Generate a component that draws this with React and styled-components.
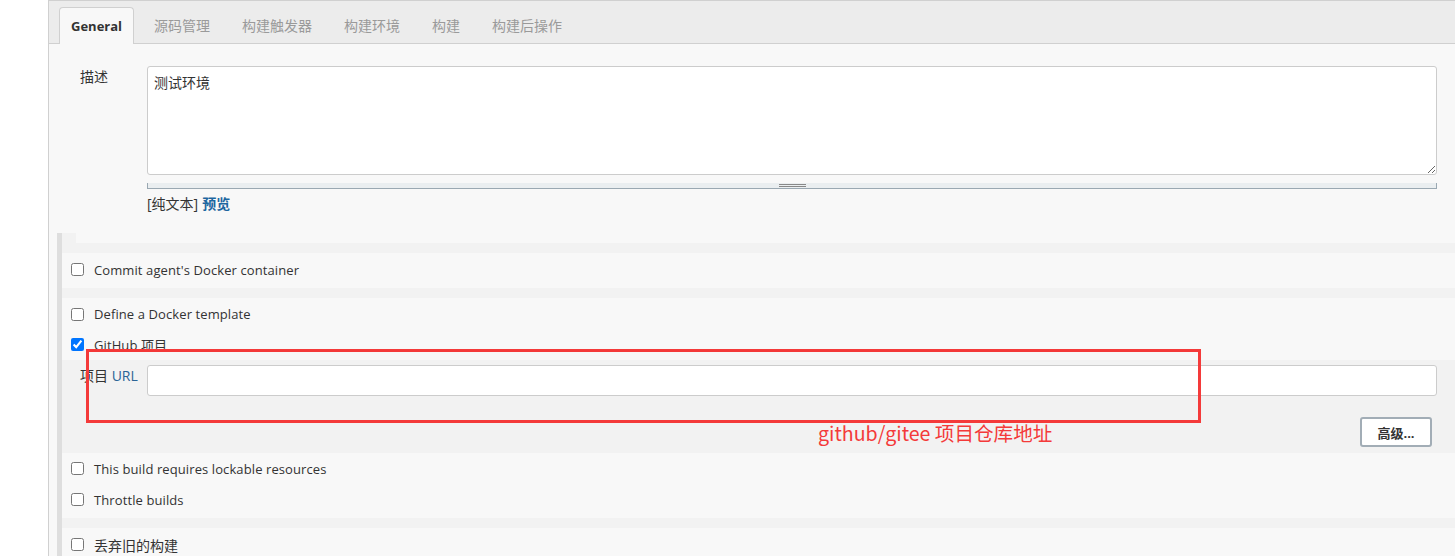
import React from 'react';
import styled, { createGlobalStyle } from 'styled-components';

const GlobalStyle = createGlobalStyle`
  html, body {
    margin: 0;
    padding: 0;
    background: #ffffff;
  }
  body {
    font-family: "Open Sans", "Noto Sans CJK SC", sans-serif;
    font-size: 13px;
    color: #333333;
  }
  * {
    box-sizing: border-box;
  }
`;

const Page = styled.div`
  position: relative;
  display: flex;
  width: 1455px;
  height: 556px;
  overflow: hidden;
`;

const Gutter = styled.div`
  flex: none;
  width: 48px;
  background: #ffffff;
`;

const Panel = styled.div`
  flex: 1;
  display: flex;
  flex-direction: column;
  background: #f8f8f8;
  border-left: 1px solid #d0d0d0;
  border-top: 1px solid #d0d0d0;
`;

const TabBar = styled.div`
  flex: none;
  display: flex;
  align-items: flex-end;
  height: 43px;
  padding-left: 10px;
  background: #ececec;
  border-bottom: 1px solid #d0d0d0;
`;

const Tab = styled.div`
  display: flex;
  align-items: center;
  height: ${p => (p.active ? '37px' : '36px')};
  margin-bottom: ${p => (p.active ? '-1px' : '0')};
  margin-right: ${p => (p.active ? '4px' : '0')};
  padding: 0 ${p => (p.active ? '11px' : '16px')};
  font-size: ${p => (p.active ? '13px' : '14px')};
  font-weight: ${p => (p.active ? 700 : 400)};
  color: ${p => (p.active ? '#333333' : '#9a9a9a')};
  background: ${p => (p.active ? '#f8f8f8' : 'transparent')};
  border: ${p => (p.active ? '1px solid #d0d0d0' : 'none')};
  border-bottom: none;
  border-radius: 4px 4px 0 0;
`;

const Form = styled.div`
  padding-top: 22px;
`;

const FieldRow = styled.div`
  display: grid;
  grid-template-columns: ${p => p.labelWidth}px 1fr;
  padding-right: ${p => (p.flush ? 0 : 18)}px;
`;

const FieldLabel = styled.div`
  padding-left: ${p => p.indent}px;
  padding-top: ${p => p.top || 0}px;
  line-height: 22px;
  font-size: 14px;
  color: #333333;
`;

const LinkWord = styled.span`
  color: #2a6496;
`;

const TextArea = styled.textarea`
  display: block;
  width: 100%;
  height: 109px;
  margin: 0;
  padding: 6px 6px;
  font-family: "Open Sans", "Noto Sans CJK SC", sans-serif;
  font-size: 14px;
  line-height: 20px;
  color: #333333;
  background: #ffffff;
  border: 1px solid #cccccc;
  border-radius: 3px;
  resize: vertical;
  outline: none;
`;

const Handle = styled.div`
  display: flex;
  flex-direction: column;
  align-items: center;
  gap: 1px;
  height: 6px;
  margin-top: 8px;
  padding-top: 1px;
  background: #eaeef0;
  border: 1px solid #9aa8b2;
  border-top: none;
`;

const GripLine = styled.div`
  width: 27px;
  height: 1px;
  background: #888888;
`;

const Preview = styled.div`
  margin-top: 5px;
  line-height: 20px;
  font-size: 14px;
  color: #333333;
`;

const PreviewLink = styled.span`
  margin-left: 4px;
  color: #1c66a0;
  font-weight: 700;
`;

const Section = styled.div`
  margin-top: 19px;
  margin-left: 8px;
  flex: 1;
  background: #f2f2f2;
  border-left: 5px solid #dedede;
`;

const SectionCap = styled.div`
  height: 10px;
  margin-left: 14px;
  background: #f8f8f8;
`;

const Block = styled.div`
  margin-top: ${p => (p.gap ? '10px' : '0')};
  padding: ${p => p.pad || '0'};
  background: #f8f8f8;
`;

const CheckLine = styled.label`
  display: flex;
  align-items: center;
  gap: 10px;
  height: ${p => p.h}px;
  padding-left: 9px;
  color: #333333;
  font-size: ${p => (p.cjk ? '14px' : '13px')};
  letter-spacing: ${p => (p.cjk ? '0' : '0.1px')};
`;

const Box = styled.input.attrs({ type: 'checkbox' })`
  width: 13px;
  height: 13px;
  margin: 0;
  accent-color: #0075ff;
`;

const Nested = styled.div`
  padding: 5px 18px 6px 0;
`;

const UrlInput = styled.input`
  display: block;
  width: 100%;
  height: 31px;
  margin: 0;
  padding: 0 6px;
  background: #ffffff;
  border: 1px solid #cccccc;
  border-radius: 3px;
  outline: none;
`;

const ButtonRow = styled.div`
  display: flex;
  justify-content: flex-end;
  margin-top: 21px;
  padding-right: 5px;
`;

const AdvancedButton = styled.button`
  width: 72px;
  height: 30px;
  padding: 0;
  font-family: "Open Sans", "Noto Sans CJK SC", sans-serif;
  font-size: 13px;
  font-weight: 700;
  color: #333333;
  background: #ffffff;
  border: 2px solid #a2adb6;
  border-radius: 3px;
`;

const Annotation = styled.div`
  position: absolute;
  left: 86px;
  top: 349px;
  width: 1115px;
  height: 74px;
  border: 3px solid #f43a3a;
  pointer-events: none;
`;

const AnnotationText = styled.div`
  position: absolute;
  left: 818px;
  top: 419px;
  font-family: "Noto Sans CJK SC", sans-serif;
  font-size: 19.6px;
  line-height: 28px;
  color: #f43a3a;
  white-space: nowrap;
`;

const tabs = ['源码管理', '构建触发器', '构建环境', '构建', '构建后操作'];

export default function App() {
  return (
    <>
      <GlobalStyle />
      <Page>
        <Gutter />
        <Panel>
          <TabBar>
            <Tab active>General</Tab>
            {tabs.map(t => (
              <Tab key={t}>{t}</Tab>
            ))}
          </TabBar>

          <Form>
            <FieldRow labelWidth={98}>
              <FieldLabel indent={31}>描述</FieldLabel>
              <div>
                <TextArea defaultValue="测试环境" />
                <Handle>
                  <GripLine />
                  <GripLine />
                </Handle>
                <Preview>
                  [纯文本]<PreviewLink>预览</PreviewLink>
                </Preview>
              </div>
            </FieldRow>
          </Form>

          <Section>
            <SectionCap />
            <Block gap pad="0 0 2px">
              <CheckLine h={33}>
                <Box />
                Commit agent's Docker container
              </CheckLine>
            </Block>
            <Block gap pad="1px 0">
              <CheckLine h={30}>
                <Box />
                Define a Docker template
              </CheckLine>
              <CheckLine h={30}>
                <Box defaultChecked />
                GitHub 项目
              </CheckLine>
            </Block>
            <Nested>
              <FieldRow labelWidth={85} flush>
                <FieldLabel indent={18}>
                  项目 <LinkWord>URL</LinkWord>
                </FieldLabel>
                <UrlInput />
              </FieldRow>
              <ButtonRow>
                <AdvancedButton>高级...</AdvancedButton>
              </ButtonRow>
            </Nested>
            <Block pad="0 0 3px">
              <CheckLine h={31}>
                <Box />
                This build requires lockable resources
              </CheckLine>
              <CheckLine h={31}>
                <Box />
                Throttle builds
              </CheckLine>
            </Block>
            <Block gap pad="0 0 40px">
              <CheckLine h={33} cjk>
                <Box />
                丢弃旧的构建
              </CheckLine>
            </Block>
          </Section>
        </Panel>

        <Annotation />
        <AnnotationText>github/gitee 项目仓库地址</AnnotationText>
      </Page>
    </>
  );
}
